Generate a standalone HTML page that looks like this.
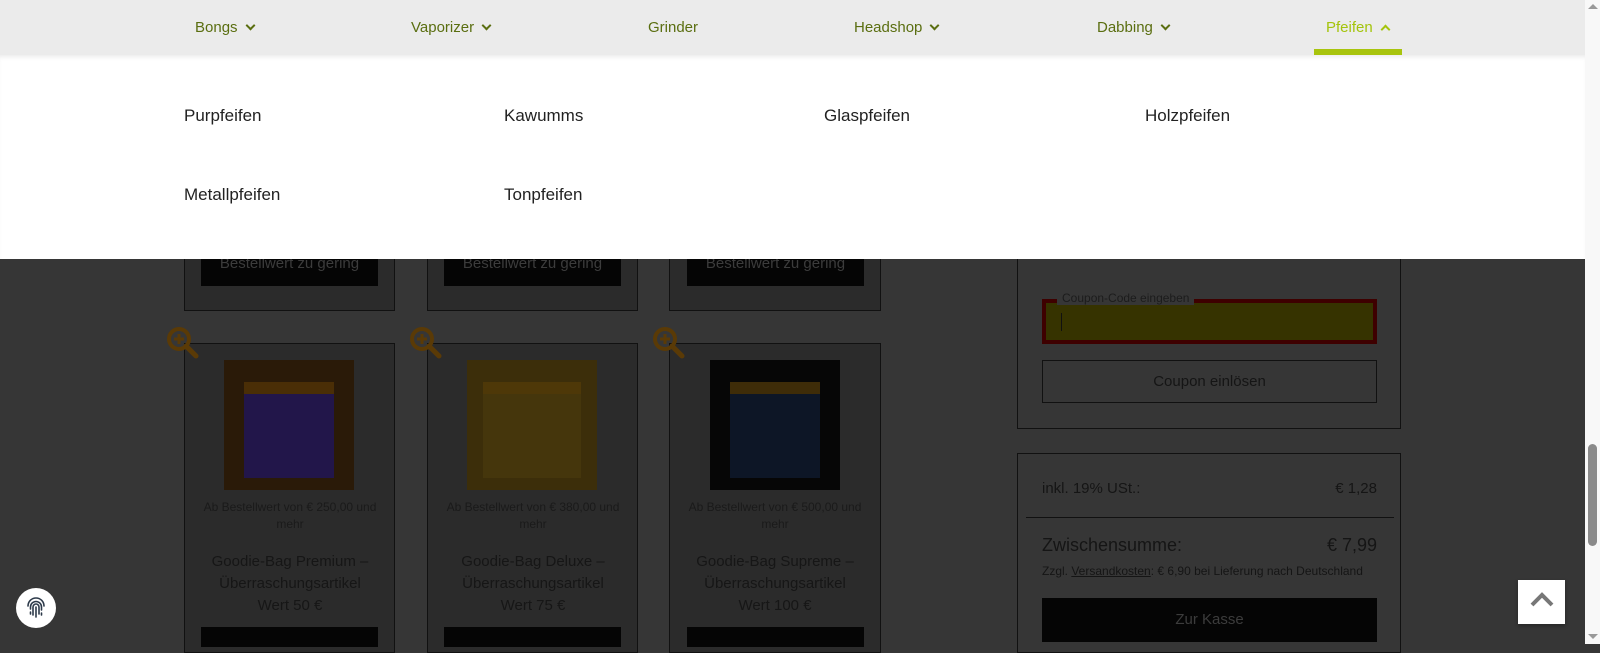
<!DOCTYPE html>
<html><head><meta charset="utf-8"><style>
*{margin:0;padding:0;box-sizing:border-box}
body{width:1600px;height:644px;overflow:hidden;background:#363636;font-family:"Liberation Sans",sans-serif;position:relative}
.a{position:absolute}
.nav{left:0;top:0;width:1585px;height:55px;background:#ebebeb}
.nav span{position:absolute;top:19px;font-size:15px;color:#5a6e10}
.chev{display:inline-block;width:7px;height:7px;border-right:2px solid currentColor;border-bottom:2px solid currentColor;transform:rotate(45deg);margin-left:9px;position:relative;top:-3px}
.up{transform:rotate(-135deg);top:1px}
.drop{left:0;top:55px;width:1585px;height:204px;background:#fff;box-shadow:inset 0 4px 4px -2px rgba(0,0,0,.08)}
.drop span{position:absolute;font-size:17px;color:#222}
.card{border:1px solid #111;background:#2b2b2b}
.btn{background:#050505;color:#3c3c3c;text-align:center;font-size:15px}
.sm{font-size:12px;color:#1a1a1a;text-align:center;line-height:17px}
.tt{font-size:15px;color:#161616;text-align:center;line-height:22px}
.box{border:1px solid #111}
.sb{left:1585px;top:0;width:15px;height:644px;background:#f8f8f8}
</style></head><body>
<div class="a nav">
<span style="left:195px">Bongs<i class="chev"></i></span>
<span style="left:411px">Vaporizer<i class="chev"></i></span>
<span style="left:648px">Grinder</span>
<span style="left:854px">Headshop<i class="chev"></i></span>
<span style="left:1097px">Dabbing<i class="chev"></i></span>
<span style="left:1326px;color:#a4c40c">Pfeifen<i class="chev up"></i></span>
<div class="a" style="left:1314px;top:49px;width:88px;height:6px;background:#a8c40e"></div>
</div>
<div class="a drop">
<span style="left:184px;top:51px">Purpfeifen</span>
<span style="left:504px;top:51px">Kawumms</span>
<span style="left:824px;top:51px">Glaspfeifen</span>
<span style="left:1145px;top:51px">Holzpfeifen</span>
<span style="left:184px;top:130px">Metallpfeifen</span>
<span style="left:504px;top:130px">Tonpfeifen</span>
</div>

<div class="a card" style="left:184px;top:259px;width:211px;height:52px;border-top:none"></div>
<div class="a card" style="left:427px;top:259px;width:211px;height:52px;border-top:none"></div>
<div class="a card" style="left:669px;top:259px;width:212px;height:52px;border-top:none"></div>
<div class="a btn" style="left:201px;top:259px;width:177px;height:27px;overflow:hidden"><div style="position:relative;top:-4px">Bestellwert zu gering</div></div>
<div class="a btn" style="left:444px;top:259px;width:177px;height:27px;overflow:hidden"><div style="position:relative;top:-4px">Bestellwert zu gering</div></div>
<div class="a btn" style="left:687px;top:259px;width:177px;height:27px;overflow:hidden"><div style="position:relative;top:-4px">Bestellwert zu gering</div></div>

<div class="a card" style="left:184px;top:343px;width:211px;height:310px"></div>
<div class="a card" style="left:427px;top:343px;width:211px;height:310px"></div>
<div class="a card" style="left:669px;top:343px;width:212px;height:310px"></div>

<svg class="a" style="left:166px;top:326px" width="34" height="34" viewBox="0 0 34 34"><circle cx="13" cy="13" r="10" fill="none" stroke="#5a3a06" stroke-width="4"/><path d="M20 20l10 10" stroke="#5a3a06" stroke-width="5" stroke-linecap="round"/><path d="M13 8v10M8 13h10" stroke="#5a3a06" stroke-width="3"/></svg>
<svg class="a" style="left:409px;top:326px" width="34" height="34" viewBox="0 0 34 34"><circle cx="13" cy="13" r="10" fill="none" stroke="#5a3a06" stroke-width="4"/><path d="M20 20l10 10" stroke="#5a3a06" stroke-width="5" stroke-linecap="round"/><path d="M13 8v10M8 13h10" stroke="#5a3a06" stroke-width="3"/></svg>
<svg class="a" style="left:652px;top:326px" width="34" height="34" viewBox="0 0 34 34"><circle cx="13" cy="13" r="10" fill="none" stroke="#5a3a06" stroke-width="4"/><path d="M20 20l10 10" stroke="#5a3a06" stroke-width="5" stroke-linecap="round"/><path d="M13 8v10M8 13h10" stroke="#5a3a06" stroke-width="3"/></svg>

<div class="a" style="left:224px;top:360px;width:130px;height:130px;background:#2a1a08"><div style="margin:22px 20px;height:96px;background:#22164a;border-top:12px solid #4a2e06"></div></div>
<div class="a" style="left:467px;top:360px;width:130px;height:130px;background:#3c2e0a"><div style="margin:22px 16px;height:96px;background:#45360c;border-top:12px solid #4e3808"></div></div>
<div class="a" style="left:710px;top:360px;width:130px;height:130px;background:#060606"><div style="margin:22px 20px;height:96px;background:#0d1626;border-top:12px solid #3e2c08"></div></div>

<div class="a sm" style="left:195px;top:499px;width:190px">Ab Bestellwert von € 250,00 und mehr</div>
<div class="a sm" style="left:438px;top:499px;width:190px">Ab Bestellwert von € 380,00 und mehr</div>
<div class="a sm" style="left:680px;top:499px;width:190px">Ab Bestellwert von € 500,00 und mehr</div>
<div class="a tt" style="left:190px;top:551px;width:200px">Goodie-Bag Premium –<br>Überraschungsartikel<br>Wert 50 €</div>
<div class="a tt" style="left:433px;top:551px;width:200px">Goodie-Bag Deluxe –<br>Überraschungsartikel<br>Wert 75 €</div>
<div class="a tt" style="left:675px;top:551px;width:200px">Goodie-Bag Supreme –<br>Überraschungsartikel<br>Wert 100 €</div>
<div class="a btn" style="left:201px;top:627px;width:177px;height:20px"></div>
<div class="a btn" style="left:444px;top:627px;width:177px;height:20px"></div>
<div class="a btn" style="left:687px;top:627px;width:177px;height:20px"></div>

<div class="a box" style="left:1017px;top:259px;width:384px;height:170px;border-top:none"></div>
<div class="a" style="left:1042px;top:299px;width:335px;height:45px;border:4px solid #3e0000;background:#363300"></div>
<div class="a" style="left:1057px;top:291px;padding:0 5px;background:#363636;font-size:12px;color:#1c1c1c;line-height:14px">Coupon-Code eingeben</div>
<div class="a" style="left:1061px;top:313px;width:1px;height:18px;background:#111"></div>
<div class="a box" style="left:1042px;top:360px;width:335px;height:43px;text-align:center;line-height:41px;font-size:15px;color:#151515">Coupon einlösen</div>

<div class="a box" style="left:1017px;top:453px;width:384px;height:200px"></div>
<div class="a" style="left:1042px;top:480px;font-size:15px;color:#151515">inkl. 19% USt.:</div>
<div class="a" style="left:1300px;top:480px;width:77px;text-align:right;font-size:15px;color:#151515">€ 1,28</div>
<div class="a" style="left:1026px;top:517px;width:368px;height:1px;background:#111"></div>
<div class="a" style="left:1042px;top:535px;font-size:18px;color:#151515">Zwischensumme:</div>
<div class="a" style="left:1280px;top:535px;width:97px;text-align:right;font-size:18px;color:#151515">€ 7,99</div>
<div class="a" style="left:1042px;top:564px;font-size:12px;color:#151515">Zzgl. <u>Versandkosten</u>: € 6,90 bei Lieferung nach Deutschland</div>
<div class="a btn" style="left:1042px;top:598px;width:335px;height:44px;line-height:44px">Zur Kasse</div>

<div class="a" style="left:1518px;top:580px;width:47px;height:44px;background:#fff;box-shadow:0 2px 4px rgba(0,0,0,.3)"></div>
<svg class="a" style="left:1528px;top:589px" width="28" height="22" viewBox="0 0 28 22"><path d="M4 16L14 6L24 16" fill="none" stroke="#777" stroke-width="4"/></svg>

<div class="a" style="left:16px;top:588px;width:40px;height:40px;border-radius:50%;background:#fff"></div>
<svg class="a" style="left:24px;top:596px" width="24" height="24" viewBox="0 0 24 24" fill="none" stroke="#2d3a4a" stroke-width="1.6" stroke-linecap="round"><path d="M4 10a8 8 0 0 1 16 0"/><path d="M6.5 13v-2a5.5 5.5 0 0 1 11 0v3"/><path d="M9 19v-8a3 3 0 0 1 6 0v7"/><path d="M12 11v10"/><path d="M6.5 16v2M17.5 17v2"/></svg>

<div class="a sb"></div>
<div class="a" style="left:1588px;top:444px;width:9px;height:102px;border-radius:5px;background:#8a8a8a"></div>
<div class="a" style="left:1588px;top:4px;width:0;height:0;border-left:5px solid transparent;border-right:5px solid transparent;border-bottom:5px solid #999"></div>
<div class="a" style="left:1588px;top:634px;width:0;height:0;border-left:5px solid transparent;border-right:5px solid transparent;border-top:5px solid #999"></div>
</body></html>
